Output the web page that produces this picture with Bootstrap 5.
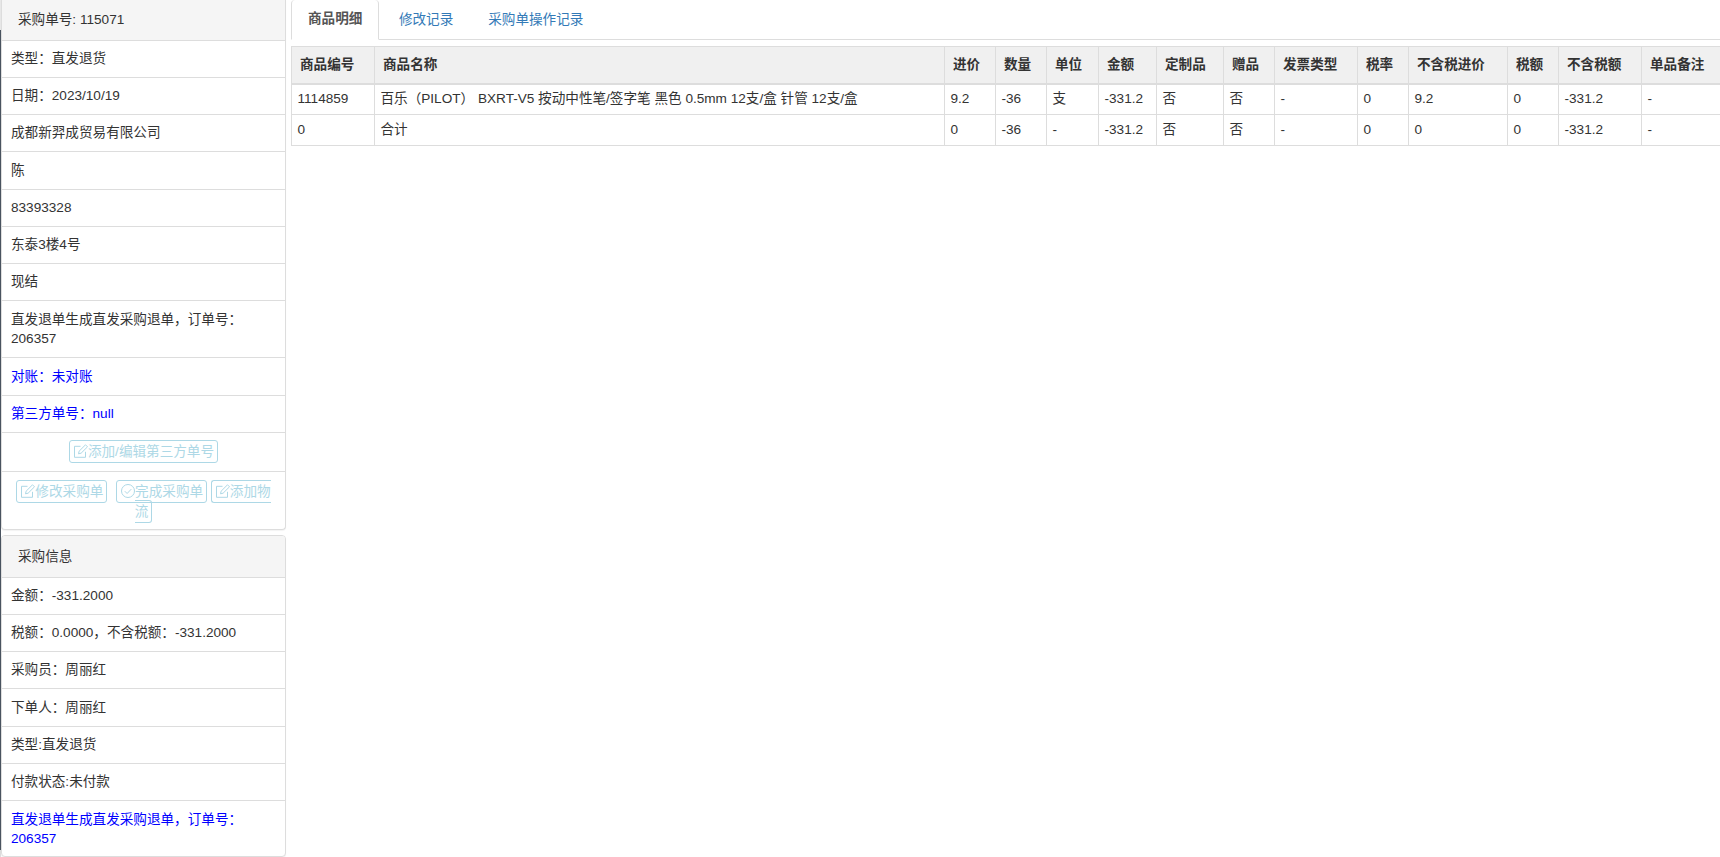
<!DOCTYPE html>
<html lang="zh">
<head>
<meta charset="utf-8">
<title>采购单</title>
<link rel="stylesheet" href="https://cdn.jsdelivr.net/npm/bootstrap@5.3.0/dist/css/bootstrap.min.css">
<style>
html,body{height:857px;overflow:hidden;background:#fff}
body{font-family:"Liberation Sans","Noto Sans CJK SC",sans-serif;font-size:13.6px;color:#333}
.page-wrap{display:flex;align-items:flex-start}
.edge-strip{width:1px;height:857px;flex:none;background:linear-gradient(#e8e8e8 0 30px,#4a5460 30px 850px,#ddd 850px)}
.side-col{width:285px;flex:none}
.main-col{flex:1;min-width:0;margin-left:5px;overflow:hidden}
.info-card{background:#fff;border:1px solid #ddd;border-radius:4px;box-shadow:0 1px 1px rgba(0,0,0,.05);margin-bottom:5px;overflow:hidden}
.info-card.first-card{border-top:0;border-radius:0 0 4px 4px}
.info-head{background:#f5f5f5;padding:0 15px 0 16px;height:41px;line-height:39px;border-bottom:1px solid #ddd}
.info-head.tall{height:42px;line-height:41px}
.info-row{padding:9px;line-height:18px;border-bottom:1px solid #ddd}
.info-row.lh19{line-height:19px}
.info-row:last-child{border-bottom:0;padding-bottom:8px}
.info-blue{color:#00f}
.info-row.btn-row{text-align:center;padding:10px 9px}
.info-row.btn-row.split{line-height:20px;padding:10px 12px 0;height:57px}
.ghost-btn{display:inline;border:1px solid #add8e6;border-radius:3px;padding:3px;color:#add8e6;font-size:13.6px;white-space:normal;text-decoration:none}
.ghost-btn.spaced{margin-left:5px}
.ghost-btn svg{width:14px;height:14px;vertical-align:-2px;margin-left:1px}
.tab-strip{height:40px;border-bottom:1px solid #ddd;margin-bottom:6px}
.tab-strip .nav-link{height:40px;padding:0 16.5px;line-height:38px;font-size:13.6px;color:#337ab7;border:1px solid transparent;border-radius:0}
.tab-strip .nav-link.active{color:#555;font-weight:700;border-color:#ddd #ddd #fff;border-top:0;border-radius:4px 4px 0 0;background:#fff;padding:0 16px;margin-right:2px}
.goods-table{table-layout:fixed;width:1440px;margin:0;border-collapse:collapse;--bs-table-color:#333;--bs-table-border-color:#ddd;font-size:13.6px}
.goods-table th,.goods-table td{border:1px solid #ddd;padding:0 5.5px;height:31px;line-height:18px;vertical-align:middle;white-space:nowrap;overflow:hidden}
.goods-table th{background:#f0f0f0;height:37px;font-size:13.6px;padding:0 8px;border-bottom:2px solid #ddd;color:#333}
</style>
</head>
<body>
<div class="page-wrap">
  <div class="edge-strip"></div>
  <div class="side-col">
    <div class="info-card first-card">
      <div class="info-head">采购单号: 115071</div>
      <div class="info-row">类型：直发退货</div>
      <div class="info-row">日期：2023/10/19</div>
      <div class="info-row">成都新羿成贸易有限公司</div>
      <div class="info-row lh19">陈</div>
      <div class="info-row">83393328</div>
      <div class="info-row">东泰3楼4号</div>
      <div class="info-row">现结</div>
      <div class="info-row lh19">直发退单生成直发采购退单，订单号：206357</div>
      <div class="info-row lh19 info-blue">对账：未对账</div>
      <div class="info-row info-blue">第三方单号：null</div>
      <div class="info-row btn-row">
        <a class="ghost-btn" href="#"><svg viewBox="1.5 0.7 14 14" fill="none" stroke="currentColor" stroke-width="1"><path d="M13 8.5V14H2V3h6"/><path d="M6 10.5l.6-2.6L13 1.5l2 2-6.4 6.4z"/></svg>添加/编辑第三方单号</a>
      </div>
      <div class="info-row btn-row split">
        <a class="ghost-btn" href="#"><svg viewBox="1.5 0.7 14 14" fill="none" stroke="currentColor" stroke-width="1"><path d="M13 8.5V14H2V3h6"/><path d="M6 10.5l.6-2.6L13 1.5l2 2-6.4 6.4z"/></svg>修改采购单</a>
        <a class="ghost-btn spaced" href="#"><svg viewBox="1 1 14 14" fill="none" stroke="currentColor" stroke-width="1"><circle cx="8" cy="8" r="6.5"/><path d="M4.8 8.2l2.3 2.3 4.2-4.4"/></svg>完成采购单</a>
        <a class="ghost-btn" href="#"><svg viewBox="1.5 0.7 14 14" fill="none" stroke="currentColor" stroke-width="1"><path d="M13 8.5V14H2V3h6"/><path d="M6 10.5l.6-2.6L13 1.5l2 2-6.4 6.4z"/></svg>添加物流</a>
      </div>
    </div>
    <div class="info-card">
      <div class="info-head tall">采购信息</div>
      <div class="info-row">金额：-331.2000</div>
      <div class="info-row">税额：0.0000，不含税额：-331.2000</div>
      <div class="info-row">采购员：周丽红</div>
      <div class="info-row lh19">下单人：周丽红</div>
      <div class="info-row">类型:直发退货</div>
      <div class="info-row">付款状态:未付款</div>
      <div class="info-row lh19 info-blue">直发退单生成直发采购退单，订单号：206357</div>
    </div>
  </div>
  <div class="main-col">
    <ul class="nav tab-strip">
      <li class="nav-item"><a class="nav-link active" href="#">商品明细</a></li>
      <li class="nav-item"><a class="nav-link" href="#">修改记录</a></li>
      <li class="nav-item"><a class="nav-link" href="#">采购单操作记录</a></li>
    </ul>
    <table class="goods-table">
      <colgroup>
        <col style="width:83px"><col style="width:570px"><col style="width:51px"><col style="width:51px"><col style="width:52px"><col style="width:58px"><col style="width:67px"><col style="width:51px"><col style="width:83px"><col style="width:51px"><col style="width:99px"><col style="width:51px"><col style="width:83px"><col style="width:90px">
      </colgroup>
      <thead>
        <tr><th>商品编号</th><th>商品名称</th><th>进价</th><th>数量</th><th>单位</th><th>金额</th><th>定制品</th><th>赠品</th><th>发票类型</th><th>税率</th><th>不含税进价</th><th>税额</th><th>不含税额</th><th>单品备注</th></tr>
      </thead>
      <tbody>
        <tr><td>1114859</td><td>百乐（PILOT） BXRT-V5 按动中性笔/签字笔 黑色 0.5mm 12支/盒 针管 12支/盒</td><td>9.2</td><td>-36</td><td>支</td><td>-331.2</td><td>否</td><td>否</td><td>-</td><td>0</td><td>9.2</td><td>0</td><td>-331.2</td><td>-</td></tr>
        <tr><td>0</td><td>合计</td><td>0</td><td>-36</td><td>-</td><td>-331.2</td><td>否</td><td>否</td><td>-</td><td>0</td><td>0</td><td>0</td><td>-331.2</td><td>-</td></tr>
      </tbody>
    </table>
  </div>
</div>
<script src="https://cdn.jsdelivr.net/npm/bootstrap@5.3.0/dist/js/bootstrap.bundle.min.js"></script>
</body>
</html>
